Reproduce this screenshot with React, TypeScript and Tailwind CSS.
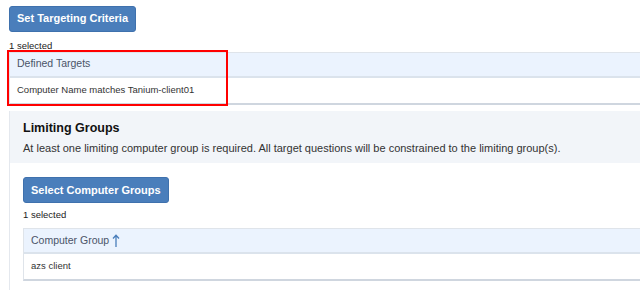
import React from "react";

const font = { fontFamily: '"Liberation Sans", Arial, sans-serif' };

const BlueButton = ({ label }: { label: string }) => (
    <button
        type="button"
        className="h-[26px] px-[7px] rounded-[3px] bg-[#4a7ebb] border border-[#3f71ad] text-white font-bold text-[11px] leading-none"
    >
        {label}
    </button>
);

const SortUp = () => (
    <svg width="8" height="14" viewBox="0 0 8 14" className="ml-[3px]">
        <path
            d="M4 13V1.5M1 4.5L4 1.2L7 4.5"
            fill="none"
            stroke="#4a7ebb"
            strokeWidth="1.3"
        />
    </svg>
);

const App = () => {
    return (
        <div
            className="w-[640px] h-[290px] overflow-hidden bg-white text-[#333]"
            style={font}
        >
            <div className="pl-[9px] pt-[5px]">
                <BlueButton label="Set Targeting Criteria" />
                <div className="text-[9.5px] leading-[13px] mt-[7px] text-[#222]">
                    1 selected
                </div>

                {/* defined targets table with highlight */}
                <div className="relative w-[700px]">
                    <div className="border border-[#dfe4ea] border-b-[2px] border-b-[#cfd6df]">
                        <div className="h-[25px] bg-[#ebf3fe] border-b-[2px] border-[#dbe3ec] flex items-center pl-[7px] text-[10.5px] text-[#4a5468]">
                            Defined Targets
                        </div>
                        <div className="h-[25px] flex items-center pl-[7px] text-[9.5px] text-[#333]">
                            Computer Name matches Tanium-client01
                        </div>
                    </div>
                    <div className="absolute left-[-2px] top-[-2px] w-[221px] h-[56px] border-[2px] border-[#f00]" />
                </div>
            </div>

            {/* limiting groups panel */}
            <div className="ml-[9px] mt-[6px] border-l border-[#e4e8ee] w-[700px]">
                <div className="bg-[#f2f5f9] pl-[13px] pt-[10px] h-[52px]">
                    <div className="text-[12.5px] font-bold text-[#111] leading-[15px]">
                        Limiting Groups
                    </div>
                    <div className="text-[11px] leading-[14px] mt-[5px] text-[#333]">
                        At least one limiting computer group is required. All
                        target questions will be constrained to the limiting
                        group(s).
                    </div>
                </div>
                <div className="pl-[13px] pt-[14px] pb-[10px]">
                    <BlueButton label="Select Computer Groups" />
                    <div className="text-[9.5px] leading-[13px] mt-[5px] text-[#222]">
                        1 selected
                    </div>
                    <div className="mt-[7px] border border-[#dfe4ea] border-b-[2px] border-b-[#cfd6df]">
                        <div className="h-[25px] bg-[#ebf3fe] border-b-[2px] border-[#dbe3ec] flex items-center pl-[7px] text-[10.5px] text-[#4a5468]">
                            Computer Group
                            <SortUp />
                        </div>
                        <div className="h-[25px] flex items-center pl-[7px] text-[9.5px] text-[#333]">
                            azs client
                        </div>
                    </div>
                </div>
            </div>
        </div>
    );
};

export default App;
